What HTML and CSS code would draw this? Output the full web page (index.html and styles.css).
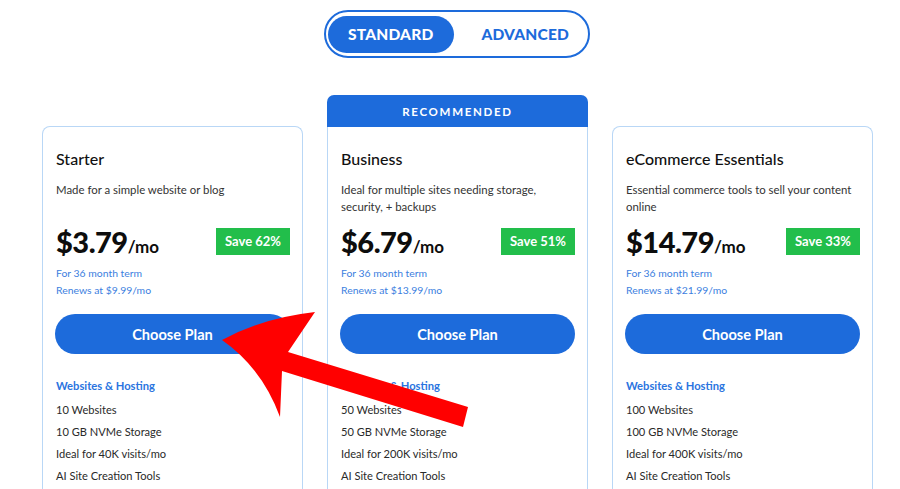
FILE: index.html
```html
<!DOCTYPE html>
<html>
<head>
<meta charset="utf-8">
<link rel="stylesheet" href="styles.css">
</head>
<body>
<div class="page">
  <div class="toggle-wrap">
    <div class="toggle">
      <span class="tab active">STANDARD</span>
      <span class="tab other">ADVANCED</span>
    </div>
  </div>
  <div class="cards">
    <div class="card plain">
      <div class="card-body">
        <h2 class="title">Starter</h2>
        <p class="desc">Made for a simple website or blog</p>
        <div class="price-row">
          <div class="price"><span class="amount">$3.79</span><span class="per">/mo</span></div>
          <span class="save">Save 62%</span>
        </div>
        <div class="term">
          <div>For 36 month term</div>
          <div>Renews at $9.99/mo</div>
        </div>
        <div class="btn">Choose Plan</div>
        <div class="feat-head">Websites &amp; Hosting</div>
        <ul class="feats">
          <li>10 Websites</li>
          <li>10 GB NVMe Storage</li>
          <li>Ideal for 40K visits/mo</li>
          <li>AI Site Creation Tools</li>
        </ul>
      </div>
    </div>
    <div class="card featured">
      <div class="rec">RECOMMENDED</div>
      <div class="card-body">
        <h2 class="title">Business</h2>
        <p class="desc">Ideal for multiple sites needing storage, security, + backups</p>
        <div class="price-row">
          <div class="price"><span class="amount">$6.79</span><span class="per">/mo</span></div>
          <span class="save">Save 51%</span>
        </div>
        <div class="term">
          <div>For 36 month term</div>
          <div>Renews at $13.99/mo</div>
        </div>
        <div class="btn">Choose Plan</div>
        <div class="feat-head">Websites &amp; Hosting</div>
        <ul class="feats">
          <li>50 Websites</li>
          <li>50 GB NVMe Storage</li>
          <li>Ideal for 200K visits/mo</li>
          <li>AI Site Creation Tools</li>
        </ul>
      </div>
    </div>
    <div class="card plain">
      <div class="card-body">
        <h2 class="title">eCommerce Essentials</h2>
        <p class="desc">Essential commerce tools to sell your content online</p>
        <div class="price-row">
          <div class="price"><span class="amount">$14.79</span><span class="per">/mo</span></div>
          <span class="save">Save 33%</span>
        </div>
        <div class="term">
          <div>For 36 month term</div>
          <div>Renews at $21.99/mo</div>
        </div>
        <div class="btn">Choose Plan</div>
        <div class="feat-head">Websites &amp; Hosting</div>
        <ul class="feats">
          <li>100 Websites</li>
          <li>100 GB NVMe Storage</li>
          <li>Ideal for 400K visits/mo</li>
          <li>AI Site Creation Tools</li>
        </ul>
      </div>
    </div>
  </div>
</div>
<svg class="arrow" width="900" height="489" viewBox="0 0 900 489">
  <path d="M222 340 Q262 318 315 312 L288 352 L468 407 L463 427 L282 371 L280 417 Q262 368 222 340 Z" fill="#ff0000"/>
</svg>
</body>
</html>
```
FILE: styles.css
```css
* { box-sizing: border-box; }
html, body { margin: 0; padding: 0; }
body {
  width: 900px;
  height: 489px;
  overflow: hidden;
  background: #fff;
  font-family: Lato, "Liberation Sans", sans-serif;
  color: #1a1a1a;
  position: relative;
}
.page {
  padding: 10px 0 0 42px;
  width: 900px;
}
.toggle-wrap {
  width: 829px;
  display: flex;
  justify-content: center;
}
.toggle {
  display: flex;
  align-items: center;
  width: 266px;
  height: 48px;
  border: 2px solid #1d6bdb;
  border-radius: 24px;
  padding: 3px 3px 3px 2px;
}
.tab {
  height: 37px;
  border-radius: 19px;
  display: flex;
  align-items: center;
  justify-content: center;
  font-weight: 900;
  font-size: 15.5px;
  letter-spacing: 0.2px;
  color: #1d6bdb;
}
.tab.active {
  width: 127px;
  background: #1d6bdb;
  color: #fff;
}
.tab.other {
  width: 131px;
  padding-left: 12px;
}
.cards {
  margin-top: 37px;
  display: flex;
  align-items: flex-start;
  gap: 24px;
  width: 829px;
}
.card {
  width: 261px;
  flex: none;
}
.card.plain {
  margin-top: 31px;
  border: 1px solid #b9d7f6;
  border-bottom: none;
  border-radius: 8px 8px 0 0;
}
.card.featured .card-body {
  border: 1px solid #b9d7f6;
  border-top: none;
  padding-top: 22px;
}
.rec {
  height: 32px;
  background: #1d6bdb;
  border-radius: 7px 7px 0 0;
  color: #fff;
  font-size: 11.5px;
  font-weight: 700;
  letter-spacing: 1.7px;
  display: flex;
  align-items: center;
  justify-content: center;
}
.card-body {
  padding: 22px 12px 40px 13px;
}
.title {
  margin: 0;
  font-size: 16px;
  line-height: 20px;
  font-weight: 500;
  color: #111;
}
.desc {
  margin: 12px 0 0 0;
  font-size: 11.4px;
  line-height: 17px;
  min-height: 34px;
  color: #333;
}
.price-row {
  margin-top: 9px;
  height: 34px;
  display: flex;
  align-items: center;
  justify-content: space-between;
}
.price {
  display: flex;
  align-items: baseline;
  color: #0d0d0d;
}
.amount {
  font-size: 29px;
  font-weight: 900;
  letter-spacing: -0.5px;
}
.per {
  font-size: 17px;
  font-weight: 700;
}
.save {
  height: 27px;
  padding: 0 9px;
  background: #22be4b;
  color: #fff;
  font-size: 13px;
  font-weight: 700;
  display: flex;
  align-items: center;
}
.term {
  margin-top: 7px;
  font-size: 10.4px;
  line-height: 16.5px;
  color: #3c80e0;
}
.btn {
  margin-top: 16px;
  height: 40px;
  width: 235px;
  margin-left: -1px;
  border-radius: 20px;
  background: #1d6bdb;
  color: #fff;
  font-size: 14.6px;
  font-weight: 700;
  display: flex;
  align-items: center;
  justify-content: center;
}
.feat-head {
  margin-top: 23px;
  font-size: 11.2px;
  line-height: 18px;
  font-weight: 700;
  color: #2a74e0;
}
.feats {
  list-style: none;
  margin: 4px 0 0 0;
  padding: 0;
}
.feats li {
  font-size: 11.1px;
  line-height: 22px;
  color: #2a2a2a;
}
.arrow {
  position: absolute;
  left: 0;
  top: 0;
  pointer-events: none;
}
```
